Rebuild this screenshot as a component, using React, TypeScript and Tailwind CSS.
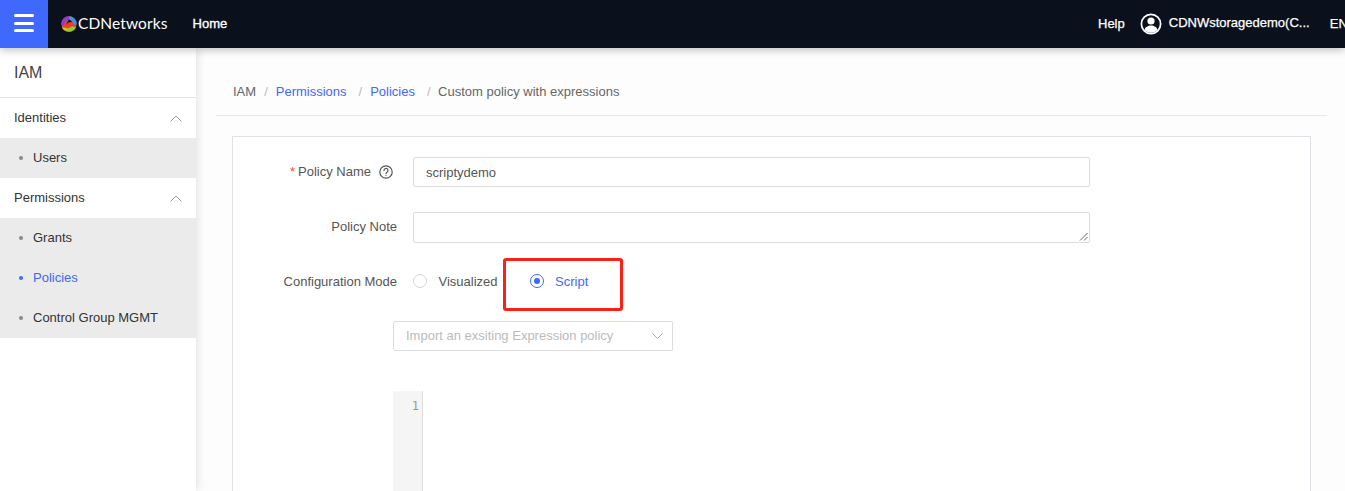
import React from "react";

function Chevron() {
  return (
    <svg width="12" height="7" viewBox="0 0 12 7" fill="none" stroke="#999" strokeWidth="1" className="mr-[14px]">
      <path d="M0.5 6.5L6 1L11.5 6.5" />
    </svg>
  );
}

function SubItem({ label, active }: { label: string; active?: boolean }) {
  return (
    <div className="h-10 flex items-center pl-[19px]">
      <span className={`w-1 h-1 rounded-full mr-[10px] ${active ? "bg-[#3f68ff]" : "bg-[#8a8a8a]"}`} />
      <span className={active ? "text-[#3f68ff]" : "text-[#333]"}>{label}</span>
    </div>
  );
}

function Logo() {
  return (
    <svg width="16" height="16" viewBox="0 0 16 16" className="mr-[1px]">
      <circle cx="8" cy="8" r="7.7" fill="#e9402c" />
      <path d="M8 0.3A7.7 7.7 0 0 1 15.7 8L13 9L11.500 5.500L8 3.500Z" fill="#2e9be6" />
      <path d="M0.3 8A7.7 7.7 0 0 1 8 0.3L8 3L4.500 5.500L2 10Z" fill="#8a3fd1" />
      <path d="M8 3.200L11.200 5.800L7.500 6.600L5 8.800Z" fill="#0b111c" />
      <path d="M1 11.200A7.700 7.700 0 0 0 15 11.200L11 10.200L7 12.400Z" fill="#8ecb2b" />
      <path d="M1 11.200A7.700 7.700 0 0 0 4 14.600L7 12.400Z" fill="#f6b21b" />
    </svg>
  );
}

export default function App() {
  return (
    <div className="w-[1345px] h-[491px] overflow-hidden flex flex-col bg-white text-[13px] text-[#333] font-['Liberation_Sans',sans-serif]">
      <header className="h-12 shrink-0 bg-[#0b111c] flex items-center text-white relative z-20 shadow-[0_2px_8px_rgba(0,0,0,0.25)]">
        <div className="w-12 h-12 bg-[#3f68ff] flex flex-col items-center justify-center gap-[4.5px] pb-[2px]">
          <span className="w-5 h-[3px] rounded-sm bg-white" />
          <span className="w-5 h-[3px] rounded-sm bg-white" />
          <span className="w-5 h-[3px] rounded-sm bg-white" />
        </div>
        <div className="ml-[13px] flex items-center">
          <Logo />
          <span className="text-[15.5px] font-['Lato',sans-serif] tracking-[0.1px]">CDNetworks</span>
        </div>
        <span className="ml-[25px] [-webkit-text-stroke:0.35px_white]">Home</span>
        <div className="ml-auto flex items-center whitespace-nowrap w-[247px] [-webkit-text-stroke:0.25px_white]">
          <span>Help</span>
          <svg width="22" height="22" viewBox="0 0 22 22" className="ml-[15px] shrink-0" fill="none">
            <circle cx="11" cy="11" r="9.6" stroke="#fff" strokeWidth="1.700" />
            <circle cx="11" cy="8" r="3.6" fill="#fff" />
            <path d="M4.500 17c.6-3 3.500-4.600 6.500-4.600s5.900 1.600 6.500 4.600c-1.700 1.700-4 2.800-6.500 2.800s-4.800-1.100-6.500-2.800z" fill="#fff" />
          </svg>
          <span className="ml-[7px] w-[142px] shrink-0 pb-[2px]">CDNWstoragedemo(C...</span>
          <span className="ml-[19px] shrink-0">EN</span>
        </div>
      </header>

      <div className="flex flex-1 min-h-0">
        <aside className="w-[196px] shrink-0 bg-white relative z-10 shadow-[2px_0_8px_rgba(0,0,0,0.1)]">
          <div className="h-[50px] flex items-center pl-[14px] text-base text-[#444] border-b border-[#e5e5e5]">IAM</div>
          <div className="h-10 flex items-center justify-between pl-[14px]">
            <span>Identities</span>
            <Chevron />
          </div>
          <div className="bg-[#ebebeb]">
            <SubItem label="Users" />
          </div>
          <div className="h-10 flex items-center justify-between pl-[14px]">
            <span>Permissions</span>
            <Chevron />
          </div>
          <div className="bg-[#ebebeb]">
            <SubItem label="Grants" />
            <SubItem label="Policies" active />
            <SubItem label="Control Group MGMT" />
          </div>
        </aside>

        <main className="flex-1 min-w-0 bg-[#fdfdfd] px-[18px]">
          <nav className="ml-[2px] h-[68px] border-b border-[#e8e8e8] flex items-center pl-[17px] pt-[21px] text-[#666]">
            <span>IAM</span>
            <span className="mx-[8px] text-[#bbb]">/</span>
            <span className="text-[#3f68ff]">Permissions</span>
            <span className="ml-[12px] mr-[8px] text-[#bbb]">/</span>
            <span className="text-[#3f68ff]">Policies</span>
            <span className="ml-[12px] mr-[7.500px] text-[#bbb]">/</span>
            <span>Custom policy with expressions</span>
          </nav>

          <section className="ml-[18px] mr-[16px] mt-5 h-[400px] border border-[#dfe1e6] bg-white pt-5 text-[#555]">
            <div className="flex items-center h-[30px]">
              <div className="w-[164px] flex justify-end items-center pr-[4px]">
                <span className="text-[#f5483b] mr-[3px]">*</span>
                <span>Policy Name</span>
                <svg width="14" height="14" viewBox="0 0 14 14" className="ml-[8px]" fill="none" stroke="#555" strokeWidth="1.2">
                  <circle cx="7" cy="7" r="6.2" />
                  <path d="M5 5.500a2 2 0 1 1 3 1.700c-.7.4-1 .8-1 1.500" strokeLinecap="round" />
                  <path d="M7 10.200v.8" strokeWidth="1.300" />
                </svg>
              </div>
              <div className="ml-[16px] w-[677px] h-[30px] border border-[#dcdcdc] rounded-[2px] flex items-center px-3 pt-[2px]">scriptydemo</div>
            </div>

            <div className="flex items-center h-[31px] mt-[25px]">
              <div className="w-[164px] text-right pb-[2px]">Policy Note</div>
              <div className="ml-[16px] w-[677px] h-[31px] border border-[#dcdcdc] rounded-[2px] relative">
                <svg width="9" height="9" viewBox="0 0 9 9" className="absolute right-[1px] bottom-[1px]" stroke="#666" strokeWidth="1">
                  <path d="M8.500 1L1 8.500M8.500 5L5 8.500" />
                </svg>
              </div>
            </div>

            <div className="flex items-center h-5 mt-[28px] relative">
              <div className="w-[164px] text-right pt-[2px]">Configuration Mode</div>
              <div className="ml-[16px] w-[14px] h-[14px] rounded-full border border-[#d5d5d5] bg-white" />
              <span className="ml-[11.500px] pt-[2px]">Visualized</span>
              <div className="ml-[32.500px] w-[14px] h-[14px] rounded-full border border-[#3f68ff] flex items-center justify-center">
                <span className="w-[6px] h-[6px] rounded-full bg-[#3f68ff]" />
              </div>
              <span className="ml-[11px] pt-[2px] text-[#3f68ff]">Script</span>
              <div className="absolute left-[270px] top-[-13px] w-[120px] h-[53px] border-[3px] border-[#fb2117] rounded-[3px]" />
            </div>

            <div className="ml-[160px] mt-[30px] w-[280px] h-[30px] border border-[#dcdcdc] rounded-[2px] flex items-center justify-between pl-3 pr-[9px] text-[#bbb]">
              <span>Import an exsiting Expression policy</span>
              <svg width="11" height="6" viewBox="0 0 11 6" fill="none" stroke="#aaa" strokeWidth="1">
                <path d="M0.500 0.500L5.500 5.500L10.500 0.500" />
              </svg>
            </div>

            <div className="ml-[160px] mt-10 w-[30px] h-[120px] bg-[#f5f5f5] border-r border-[#ddd] pt-2 pr-[3px] text-right text-[12px] leading-[14px] text-[#999] font-['DejaVu_Sans_Mono',monospace]">
              1
            </div>
          </section>
        </main>
      </div>
    </div>
  );
}
